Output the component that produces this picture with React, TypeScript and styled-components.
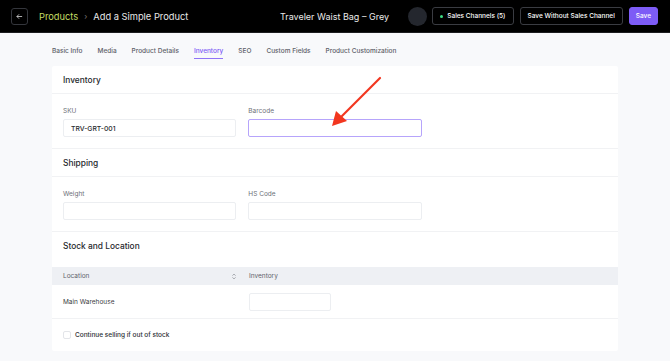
import * as React from 'react'
import styled, {createGlobalStyle} from 'styled-components'

const GlobalStyle = createGlobalStyle`
  html, body {
    margin: 0;
    padding: 0;
    background: #f8f9fb;
    font-family: Inter, "Noto Sans", sans-serif;
    -webkit-font-smoothing: antialiased;
  }
`

// Top bar
const TopBar = styled.header`
  height: 32px;
  background: #000;
  border-bottom: 1px solid #1d1d20;
  display: grid;
  grid-template-columns: 1fr auto 1fr;
  align-items: center;
  padding: 0 12px 0 11px;
  white-space: nowrap;
`

const Crumbs = styled.div`
  display: flex;
  align-items: center;
  gap: 6px;
  font-size: 9.3px;
  color: #e8e8e8;
`

const BackButton = styled.button`
  width: 17px;
  height: 17px;
  margin-right: 5px;
  padding: 0;
  display: flex;
  align-items: center;
  justify-content: center;
  background: transparent;
  border: 1px solid #34363c;
  border-radius: 3px;
  color: #ddd;
`

const CrumbLink = styled.span`
  color: #c4dd64;
`

const CrumbSep = styled.span`
  color: #777;
  font-size: 8px;
`

const Title = styled.div`
  color: #eaeaea;
  font-size: 9px;
  font-weight: 400;
`

const Actions = styled.div`
  display: flex;
  justify-content: flex-end;
  align-items: center;
  gap: 6px;
`

const Avatar = styled.div`
  width: 19px;
  height: 19px;
  border-radius: 50%;
  background: #24272e;
  margin-right: -1px;
`

const HeaderButton = styled.button<{$primary?: boolean}>`
  height: 18px;
  padding: 0 ${({$primary}) => ($primary ? '6px' : '7px')};
  display: flex;
  align-items: center;
  gap: 4px;
  white-space: nowrap;
  font-family: inherit;
  font-size: 6.5px;
  font-weight: 500;
  color: #fff;
  border-radius: 3px;
  border: 1px solid ${({$primary}) => ($primary ? '#7d5cf6' : '#3a3c42')};
  background: ${({$primary}) => ($primary ? '#7d5cf6' : '#000')};
`

const Dot = styled.span`
  width: 3px;
  height: 3px;
  border-radius: 50%;
  background: #3ddc84;
`

// Page body
const Main = styled.main`
  width: 566px;
  margin: 0 auto;
  position: relative;
`

const Tabs = styled.nav`
  display: flex;
  gap: 15px;
  height: 33px;
  align-items: flex-start;
`

const Tab = styled.div<{$active?: boolean}>`
  display: flex;
  align-items: center;
  margin-top: 11px;
  height: 14px;
  font-size: 6.5px;
  font-weight: 500;
  color: ${({$active}) => ($active ? '#7c5cf5' : '#5d6068')};
  border-bottom: 1.5px solid ${({$active}) => ($active ? '#8f74f7' : 'transparent')};
`

const Card = styled.section`
  background: #fff;
  border-radius: 2px;
`

const SectionHead = styled.div<{$tall?: boolean}>`
  padding: ${({$tall}) => ($tall ? '8px 11px 16px' : '8px 11px')};
  height: 11px;
  box-sizing: content-box;
  display: flex;
  align-items: center;
  font-size: 8.4px;
  font-weight: 500;
  color: #26282d;
  border-bottom: ${({$tall}) => ($tall ? 'none' : '1px solid #f1f2f4')};
`

const FieldGrid = styled.div`
  display: grid;
  grid-template-columns: repeat(3, 1fr);
  gap: 12px;
  padding: 12px 11px 11px;
  border-bottom: 1px solid #f1f2f4;
`

const Field = styled.label`
  display: flex;
  flex-direction: column;
  gap: 3px;
`

const FieldLabel = styled.span`
  font-size: 6.5px;
  line-height: 10px;
  color: #6d7078;
`

const Input = styled.div<{$focused?: boolean; $width?: string}>`
  height: 18px;
  width: ${({$width}) => $width || 'auto'};
  box-sizing: border-box;
  border: 1px solid ${({$focused}) => ($focused ? '#b6a4fb' : '#eceef1')};
  border-radius: 2px;
  padding: 0 7px;
  display: flex;
  align-items: center;
  font-size: 6.8px;
  font-weight: 500;
  color: #27292e;
`

const TableHead = styled.div`
  display: grid;
  grid-template-columns: 196px 1fr;
  height: 18px;
  background: #eef0f4;
  align-items: center;
  font-size: 6.5px;
  color: #5f626a;
`

const HeadCell = styled.div`
  padding-left: 11px;
  display: flex;
  align-items: center;
  justify-content: space-between;
  padding-right: 11px;
`

const TableRow = styled.div`
  display: grid;
  grid-template-columns: 196px 1fr;
  height: 33px;
  align-items: center;
  border-bottom: 1px solid #f1f2f4;
  font-size: 6.5px;
  color: #3a3c42;
`

const Cell = styled.div`
  padding-left: 11px;
`

const InvCell = styled.div`
  padding-left: 1px;
`

const CheckRow = styled.div`
  height: 32px;
  display: flex;
  align-items: center;
  gap: 4px;
  padding-left: 11px;
  font-size: 6.5px;
  font-weight: 500;
  color: #2b2d32;
`

const Checkbox = styled.span`
  width: 8px;
  height: 8px;
  box-sizing: border-box;
  border: 1px solid #e3e5e9;
  border-radius: 2px;
`

const Arrow = styled.svg`
  position: absolute;
  left: 270px;
  top: 40px;
  pointer-events: none;
`

const SortIcon = () => (
  <svg width="6" height="7" viewBox="0 0 6 7" fill="none" stroke="#8c8f96" strokeWidth="0.8">
    <path d="M1.5 2.6 3 1.1 4.5 2.6M1.5 4.4 3 5.9 4.5 4.4" />
  </svg>
)

export default function App() {
  return (
    <>
      <GlobalStyle />
      <TopBar>
        <Crumbs>
          <BackButton>
            <svg width="7" height="7" viewBox="0 0 8 8" fill="none" stroke="#ddd" strokeWidth="0.9">
              <path d="M7 4H1M3.5 1.5 1 4l2.5 2.5" />
            </svg>
          </BackButton>
          <CrumbLink>Products</CrumbLink>
          <CrumbSep>›</CrumbSep>
          <span>Add a Simple Product</span>
        </Crumbs>
        <Title>Traveler Waist Bag – Grey</Title>
        <Actions>
          <Avatar />
          <HeaderButton>
            <Dot />
            Sales Channels (5)
          </HeaderButton>
          <HeaderButton>Save Without Sales Channel</HeaderButton>
          <HeaderButton $primary>Save</HeaderButton>
        </Actions>
      </TopBar>
      <Main>
        <Tabs>
          <Tab>Basic Info</Tab>
          <Tab>Media</Tab>
          <Tab>Product Details</Tab>
          <Tab $active>Inventory</Tab>
          <Tab>SEO</Tab>
          <Tab>Custom Fields</Tab>
          <Tab>Product Customization</Tab>
        </Tabs>
        <Card>
          <SectionHead>Inventory</SectionHead>
          <FieldGrid>
            <Field>
              <FieldLabel>SKU</FieldLabel>
              <Input>TRV-GRT-001</Input>
            </Field>
            <Field>
              <FieldLabel>Barcode</FieldLabel>
              <Input $focused />
            </Field>
          </FieldGrid>
          <SectionHead>Shipping</SectionHead>
          <FieldGrid>
            <Field>
              <FieldLabel>Weight</FieldLabel>
              <Input />
            </Field>
            <Field>
              <FieldLabel>HS Code</FieldLabel>
              <Input />
            </Field>
          </FieldGrid>
          <SectionHead $tall>Stock and Location</SectionHead>
          <TableHead>
            <HeadCell>
              Location
              <SortIcon />
            </HeadCell>
            <InvCell>Inventory</InvCell>
          </TableHead>
          <TableRow>
            <Cell>Main Warehouse</Cell>
            <InvCell>
              <Input $width="82px" />
            </InvCell>
          </TableRow>
          <CheckRow>
            <Checkbox />
            Continue selling if out of stock
          </CheckRow>
        </Card>
        <Arrow width="70" height="70" viewBox="0 0 70 70">
          <path d="M58 5 L20 43" stroke="#f2361f" strokeWidth="2.2" strokeLinecap="round" />
          <path d="M10 53 L14 38 L25 48 Z" fill="#f2361f" />
        </Arrow>
      </Main>
    </>
  )
}
